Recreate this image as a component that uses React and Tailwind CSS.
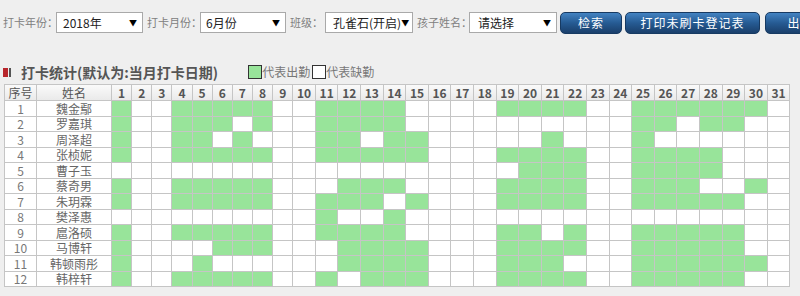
import React from 'react';

const FONT = "font-['Noto_Sans_CJK_SC','Liberation_Sans',sans-serif]";

const days = Array.from({ length: 31 }, (_, i) => i + 1);

// days on which each child clocked in
const students = [
  { name: '魏金鄢', on: [1, 4, 5, 6, 7, 8, 11, 12, 13, 14, 19, 20, 21, 22, 25, 26, 27, 28, 29, 30] },
  { name: '罗嘉琪', on: [1, 4, 5, 6, 8, 11, 12, 13, 14, 25, 26, 28, 29] },
  { name: '周泽超', on: [1, 4, 5, 7, 11, 12, 14, 15, 21, 25] },
  { name: '张桢妮', on: [1, 4, 5, 6, 7, 8, 11, 12, 13, 14, 15, 19, 20, 21, 22, 25, 26, 27, 28] },
  { name: '曹子玉', on: [20, 21, 22, 25, 26, 27, 28] },
  { name: '蔡奇男', on: [1, 4, 5, 6, 7, 8, 12, 13, 14, 19, 20, 21, 22, 25, 26, 27, 30] },
  { name: '朱玥霖', on: [1, 4, 5, 6, 7, 8, 11, 12, 13, 15, 19, 20, 21, 22, 25, 26, 27, 28, 29] },
  { name: '樊泽惠', on: [11, 14] },
  { name: '扈洛硕', on: [1, 4, 5, 6, 7, 8, 11, 12, 13, 14, 19, 20, 22, 25, 26, 27, 28, 29] },
  { name: '马博轩', on: [1, 6, 7, 8, 12, 13, 14, 15, 19, 20, 21, 22, 25, 26, 27, 28, 29] },
  { name: '韩顿雨彤', on: [1, 5, 12, 13, 14, 15, 19, 20, 21, 25, 26, 27, 28, 29, 30] },
  { name: '韩梓轩', on: [1, 4, 5, 6, 7, 8, 11, 13, 14, 15, 19, 20, 21, 22, 25, 26, 27, 28, 29] },
];

const FakeSelect = ({ value, width, pad }) => (
  <div
    className={`flex shrink-0 items-center justify-between h-[21px] bg-white border border-[#a9a9a9] text-[12px] text-[#222] pr-[5px] ${width} ${pad}`}
  >
    <span>{value}</span>
    <span className="text-[8px] text-black">▼</span>
  </div>
);

const Label = ({ children, className = '' }) => (
  <span className={`shrink-0 whitespace-nowrap text-[11px] text-[#808080] ${className}`}>{children}</span>
);

const BlueButton = ({ children, className = '' }) => (
  <button
    className={`h-[22px] rounded-[5px] border border-[#173a62] bg-gradient-to-b from-[#4383c2] via-[#265b93] to-[#1a3f6b] text-white text-[12px] tracking-[1px] shrink-0 ${className}`}
  >
    {children}
  </button>
);

const App = () => {
  return (
    <div className={`w-[800px] h-[296px] overflow-hidden bg-[#efefef] ${FONT}`}>
      {/* Filter bar */}
      <div className="flex items-center pt-[11px] pl-[3px] h-[34px] whitespace-nowrap">
        <Label className="w-[53px]">打卡年份：</Label>
        <FakeSelect value="2018年" width="w-[87px]" pad="pl-[6px]" />
        <Label className="ml-[4px] w-[53px]">打卡月份：</Label>
        <FakeSelect value="6月份" width="w-[86px]" pad="pl-[5px]" />
        <Label className="ml-[4px] w-[35px]">班级：</Label>
        <FakeSelect value="孔雀石(开启)" width="w-[88px]" pad="pl-[7px]" />
        <Label className="ml-[4px] w-[52px]">孩子姓名：</Label>
        <FakeSelect value="请选择" width="w-[88px]" pad="pl-[8px]" />
        <BlueButton className="ml-[3px] w-[62px]">检索</BlueButton>
        <BlueButton className="ml-[3px] w-[135px]">打印未刷卡登记表</BlueButton>
        <BlueButton className="ml-[5px] w-[110px]">出勤统计表</BlueButton>
      </div>

      {/* Title + legend */}
      <div className="flex items-center h-[20px] mt-[28px] pl-[3px]">
        <span className="w-[5px] h-[9px] bg-[#b8262c]"></span>
        <span className="w-[2px] h-[9px] bg-[#555] ml-[1px]"></span>
        <h2 className="ml-[10px] text-[14px] font-bold text-[#555]">打卡统计(默认为:当月打卡日期)</h2>
        <span className="ml-[30px] w-[14px] h-[14px] border border-[#333] bg-[#98e49a]"></span>
        <span className="text-[12px] text-[#777]">代表出勤</span>
        <span className="ml-[2px] w-[14px] h-[14px] border border-[#333] bg-white"></span>
        <span className="text-[12px] text-[#777]">代表缺勤</span>
      </div>

      {/* Attendance grid */}
      <table className="mt-[2px] ml-[4px] w-[786px] table-fixed border-collapse bg-white text-[12px]">
        <colgroup>
          <col className="w-[32px]" />
          <col className="w-[75px]" />
          {days.map((d) => (
            <col key={d} className={d < 10 ? 'w-[20.15px]' : 'w-[22.6px]'} />
          ))}
        </colgroup>
        <thead>
          <tr className="bg-gradient-to-b from-[#fafafa] to-[#e9e9e9]">
            <th className="h-[16px] p-0 border border-[#c5c5c5] font-normal text-[#555] leading-[14px]">序号</th>
            <th className="h-[16px] p-0 border border-[#c5c5c5] font-normal text-[#555] leading-[14px]">姓名</th>
            {days.map((d) => (
              <th key={d} className="h-[16px] p-0 border border-[#c5c5c5] font-bold text-[#555] leading-[14px]">
                {d}
              </th>
            ))}
          </tr>
        </thead>
        <tbody>
          {students.map((s, i) => (
            <tr key={s.name}>
              <td className="h-[15.5px] p-0 border border-[#c5c5c5] text-center text-[#777] leading-[13px]">{i + 1}</td>
              <td className="h-[15.5px] p-0 border border-[#c5c5c5] text-center text-[#666] leading-[13px]">{s.name}</td>
              {days.map((d) => (
                <td
                  key={d}
                  className={`h-[15.5px] p-0 border border-[#c5c5c5] ${s.on.includes(d) ? 'bg-[#98e49a]' : 'bg-white'}`}
                ></td>
              ))}
            </tr>
          ))}
        </tbody>
      </table>
    </div>
  );
};

export default App;
